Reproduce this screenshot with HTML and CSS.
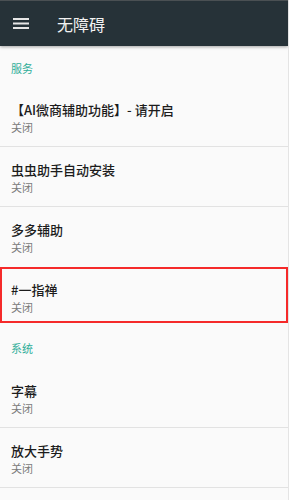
FILE: index.html
```
<!DOCTYPE html>
<html lang="zh">
<head>
<meta charset="utf-8">
<link rel="stylesheet" href="styles.css">
</head>
<body>
<div class="app">
  <header class="toolbar">
    <svg class="menu" width="16" height="12" viewBox="0 0 16 12">
      <rect x="0" y="0" width="16" height="2" fill="#e6e6e6"/>
      <rect x="0" y="4.5" width="16" height="2" fill="#e6e6e6"/>
      <rect x="0" y="9" width="16" height="2" fill="#e6e6e6"/>
    </svg>
    <div class="title">无障碍</div>
  </header>
  <div class="list">
    <div class="section">服务</div>
    <div class="item sep"><div class="t">【AI微商辅助功能】- 请开启</div><div class="s">关闭</div></div>
    <div class="item sep"><div class="t">虫虫助手自动安装</div><div class="s">关闭</div></div>
    <div class="item"><div class="t">多多辅助</div><div class="s">关闭</div></div>
    <div class="item marked"><div class="t">#一指禅</div><div class="s">关闭</div></div>
    <div class="section second">系统</div>
    <div class="item sep"><div class="t">字幕</div><div class="s">关闭</div></div>
    <div class="item sep"><div class="t">放大手势</div><div class="s">关闭</div></div>
  </div>
</div>
</body>
</html>
```
FILE: styles.css
```
* { box-sizing: border-box; }
html, body { margin: 0; padding: 0; }
body {
  background: #fafafa;
  font-family: "Noto Sans CJK SC", "Noto Sans", Roboto, sans-serif;
  width: 289px;
  height: 500px;
  overflow: hidden;
}
.app { width: 289px; height: 500px; overflow: hidden; border-right: 1px solid #e4e4e4; }
.toolbar {
  height: 46px;
  background: #263238;
  border-top: 1px solid #4a5053;
  display: flex;
  align-items: center;
  padding-left: 13px;
  box-shadow: 0 1px 3px rgba(0,0,0,0.35);
  position: relative;
  z-index: 1;
}
.menu { display: block; margin-top: 1px; }
.title {
  color: #f2f2f2;
  font-size: 16px;
  margin-left: 28px;
  line-height: 20px;
  margin-top: 1px;
}
.list { display: flex; flex-direction: column; }
.section {
  height: 41px;
  padding: 14px 0 0 11px;
  font-size: 11px;
  line-height: 16px;
  color: #2fae99;
}
.section.second { height: 45px; padding-top: 17px; }
.item {
  height: 60px;
  padding: 14px 0 0 11px;
}
.item.sep { border-bottom: 1px solid #e2e2e2; }
.t {
  font-size: 13px;
  line-height: 18px;
  color: #1c1c1c;
  font-weight: 500;
}
.s {
  font-size: 11px;
  line-height: 15px;
  color: #7a7a7a;
  margin-top: 1px;
}
.item.marked {
  height: 56px;
  border: 2px solid #f52a2a;
  padding: 12px 0 0 9px;
}
```
